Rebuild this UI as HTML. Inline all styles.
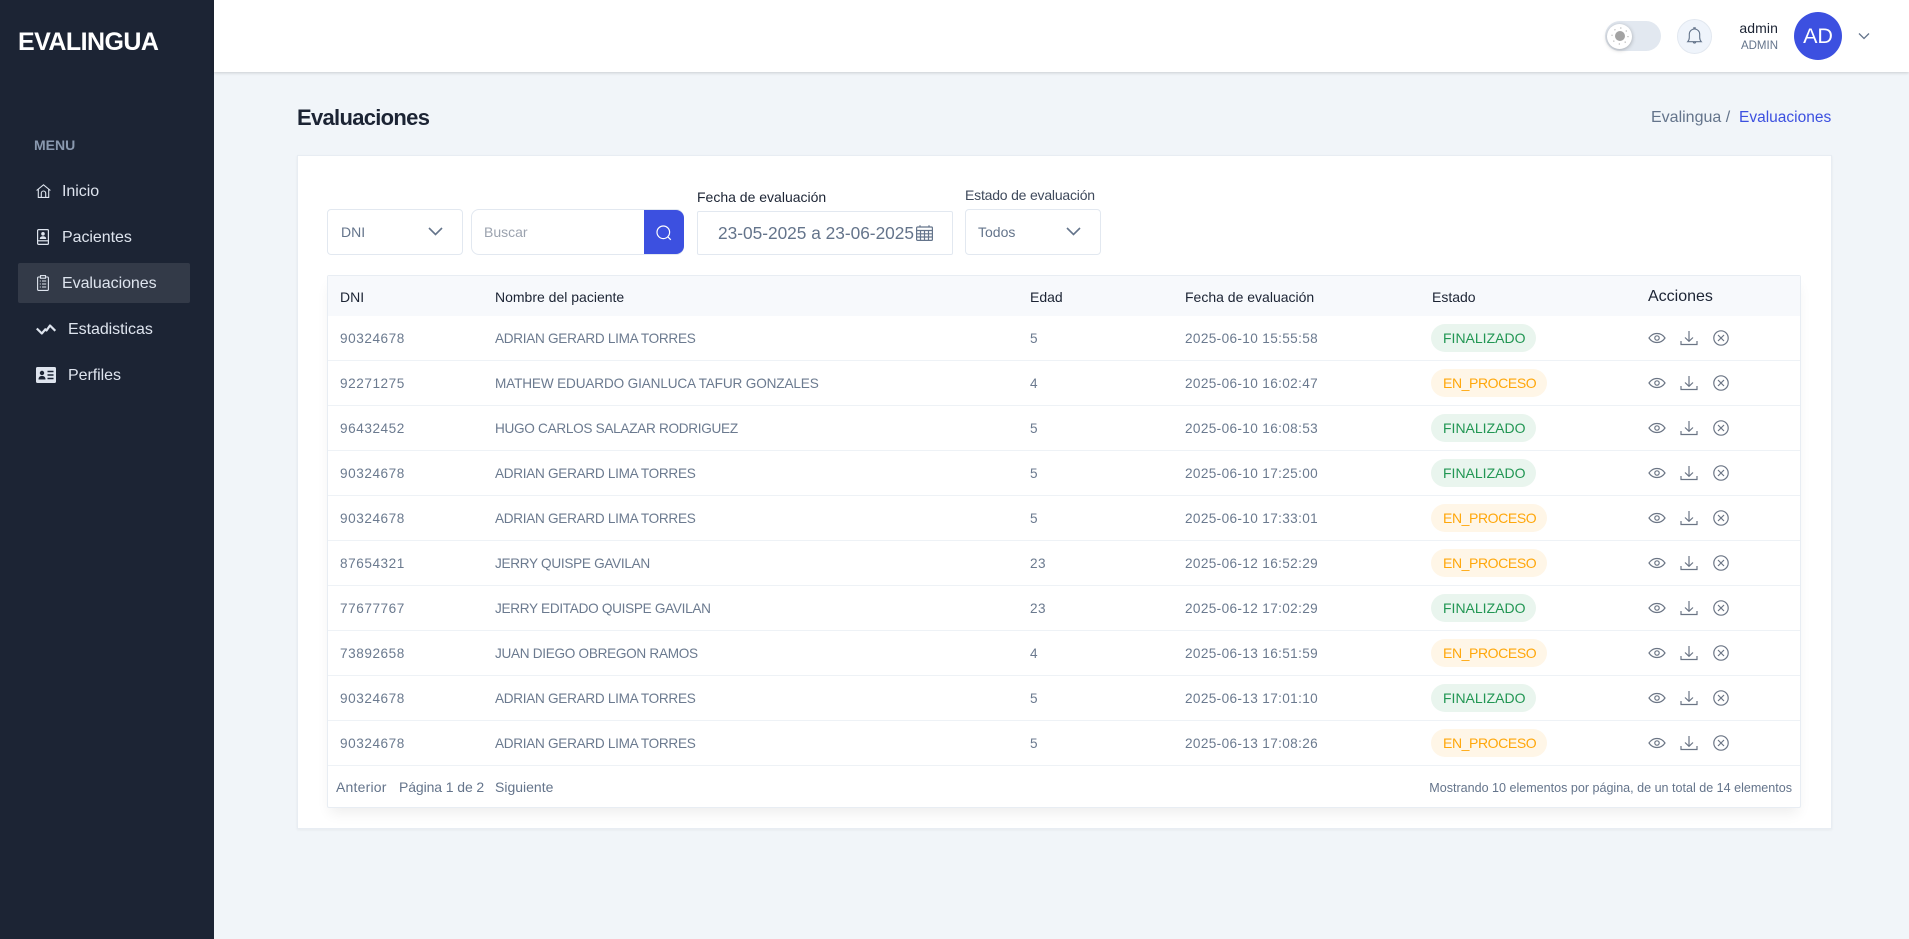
<!DOCTYPE html>
<html lang="es"><head><meta charset="utf-8"><title>Evaluaciones</title>
<style>
*{box-sizing:border-box;margin:0;padding:0}
html,body{width:1909px;height:939px;overflow:hidden;background:#f1f5f9;font-family:"Liberation Sans",sans-serif;color:#64748b}
.a{position:absolute;white-space:nowrap}
svg{position:absolute;overflow:visible;fill:none}
#side{position:absolute;left:0;top:0;width:214px;height:939px;background:#1c2434}
.nav{position:absolute;font-size:16px;line-height:24px;color:#dee4ee;white-space:nowrap;letter-spacing:-.05px}
#head{position:absolute;left:214px;top:0;width:1695px;height:72px;background:#fff;box-shadow:0 1px 3px rgba(0,0,0,.16)}
#card{position:absolute;left:297px;top:155px;width:1535px;height:674px;background:#fff;border:1px solid #e8edf3;box-shadow:0 1px 3px rgba(0,0,0,.05)}
.box{position:absolute;background:#fff;border:1px solid #e2e8f0;border-radius:4px;font-size:14px;color:#64748b;white-space:nowrap}
#tbl{position:absolute;left:327px;top:275px;width:1474px;height:533px;background:#fff;border:1px solid #e8edf3;border-radius:2px;box-shadow:0 8px 13px -3px rgba(0,0,0,.07)}
#th{position:absolute;left:328px;top:276px;width:1472px;height:40px;background:#f7f9fc}
.h{position:absolute;top:277px;line-height:40px;font-size:14px;color:#1c2434;white-space:nowrap}
.r{position:absolute;left:328px;width:1472px;height:45px;border-bottom:1px solid #eef2f6;font-size:13.6px;color:#6b7a8f}
.r span{position:absolute;top:0;line-height:45px;white-space:nowrap}
.r .n{letter-spacing:-.3px;left:167px}
.r .m{letter-spacing:.55px;left:12px}
.r .t{letter-spacing:.36px;left:857px}
.r .e{left:702px;letter-spacing:.5px}
.r .b{top:8px;left:1103px;height:28px;line-height:28px;border-radius:14px;padding:0 12px;font-size:14px}
.f{background:#e9f5ee;color:#219653;width:105px}
.p{background:#fff6e7;color:#ffa70b;width:116px;letter-spacing:-.4px}
.r svg{stroke:#6b7585;stroke-width:1.2}
</style></head><body>
<div id="side">
<div class="a" style="left:18px;top:27px;font-size:25px;font-weight:700;line-height:30px;color:#fff;letter-spacing:-.55px">EVALINGUA</div>
<div class="a" style="left:34px;top:136px;font-size:14px;font-weight:700;line-height:18px;color:#8a99af">MENU</div>
<div style="position:absolute;left:18px;top:263px;width:172px;height:40px;background:#333a48;border-radius:2px"></div>
<svg style="left:36px;top:184px" width="15" height="14" viewBox="0 0 15 14" stroke="#dee4ee" stroke-width="1.100"><path d="M.6 6.500 7.500.8l6.900 5.700M2.300 5.400v8h10.400v-8M5.300 13.400V9.200a2.200 2.200 0 0 1 4.400 0v4.200"/></svg>
<div class="nav" style="left:62px;top:180px">Inicio</div>
<svg style="left:37px;top:229px" width="12" height="16" viewBox="0 0 12 16" stroke="#dee4ee" stroke-width="1.200"><rect x=".6" y=".6" width="10.800" height="14.800" rx="1"/><path d="M.6 11.800h10.800"/><path fill="#dee4ee" stroke="none" d="M6 3a1.800 1.800 0 1 1 0 3.600A1.800 1.800 0 0 1 6 3zM2.800 10c0-2 1.400-2.700 3.200-2.700s3.200.7 3.200 2.700z"/></svg>
<div class="nav" style="left:62px;top:226px">Pacientes</div>
<svg style="left:37px;top:275px" width="12" height="16" viewBox="0 0 12 16" stroke="#dee4ee" stroke-width="1.100"><rect x=".6" y="2" width="10.800" height="13.400" rx="1"/><rect x="3.500" y=".6" width="5" height="2.600" fill="#333a48"/><path d="M2.800 6h1M5 6h4.200M2.800 9h1M5 9h4.200M2.800 12h1M5 12h4.200"/></svg>
<div class="nav" style="left:62px;top:272px">Evaluaciones</div>
<svg style="left:36px;top:324px" width="20" height="11" viewBox="0 0 20 11" stroke="#dee4ee" stroke-width="2.200"><path d="M.8 4.500l5 5 3.500-4.200 1.200 1.200L14 1.500l5.300 5.300" stroke-linejoin="round"/></svg>
<div class="nav" style="left:68px;top:318px">Estadisticas</div>
<svg style="left:36px;top:367px" width="20" height="16" viewBox="0 0 20 16"><rect width="20" height="16" rx="1.500" fill="#dee4ee"/><circle cx="6" cy="6" r="2.200" fill="#1c2434"/><path d="M2.500 12.500c0-2.600 1.500-3.500 3.500-3.500s3.500.9 3.500 3.500z" fill="#1c2434"/><path d="M11.500 4.500h6M11.500 8h6M11.500 11.500h6" stroke="#1c2434" stroke-width="1.500"/></svg>
<div class="nav" style="left:68px;top:364px">Perfiles</div>
</div>
<div id="head"></div>
<div style="position:absolute;left:1605px;top:21px;width:56px;height:30px;border-radius:15px;background:#e2e8f0"></div>
<div style="position:absolute;left:1607px;top:23.500px;width:25px;height:25px;border-radius:50%;background:#fff;box-shadow:0 1px 4px rgba(0,0,0,.28)"></div>
<svg style="left:1610px;top:26px" width="20" height="20" viewBox="0 0 20 20"><circle cx="10" cy="10" r="5" fill="#a3a3a3"/><circle cx="10" cy="10" r="8" stroke="#b5b5b5" stroke-width="1.200" stroke-dasharray="1.200 5.080"/></svg>
<div style="position:absolute;left:1677px;top:19px;width:35px;height:35px;border-radius:50%;background:#eff4fb;border:1px solid #e2e8f0"></div>
<svg style="left:1687px;top:27px" width="15" height="18" viewBox="0 0 15 18" stroke="#64748b" stroke-width="1.100"><path d="M.7 14.700h13.600c-1.100-1.200-1.600-2.400-1.600-4.200V7.200a5.200 5.200 0 0 0-10.400 0v3.300c0 1.800-.5 3-1.600 4.200zM6.800 2V.8h1.400V2M6.300 14.900c0 1.500 2.400 1.500 2.400 0"/></svg>
<div class="a" style="right:131px;top:19px;font-size:14px;line-height:18px;color:#1c2434;letter-spacing:.1px">admin</div>
<div class="a" style="right:131px;top:37px;font-size:11.500px;line-height:18px;color:#64748b">ADMIN</div>
<div class="a" style="left:1794px;top:12px;width:48px;height:48px;border-radius:50%;background:#3c50e0;color:#fff;font-size:21.500px;line-height:48px;text-align:center">AD</div>
<svg style="left:1858px;top:32px" width="12" height="8" viewBox="0 0 12 8" stroke="#64748b" stroke-width="1.300"><path d="M1 1.500l5 5 5-5"/></svg>
<div class="a" style="left:297px;top:103px;font-size:22px;font-weight:700;line-height:30px;color:#1c2434;letter-spacing:-.7px">Evaluaciones</div>
<div class="a" style="left:1651px;top:106px;font-size:16px;line-height:24px;color:#64748b">Evalingua /</div>
<div class="a" style="left:1739px;top:106px;font-size:15.500px;line-height:24px;color:#3c50e0">Evaluaciones</div>
<div id="card"></div>
<div class="box" style="left:327px;top:209px;width:136px;height:46px;line-height:44px;padding-left:13px">DNI</div>
<svg style="left:428px;top:227px" width="15" height="9" viewBox="0 0 15 9" stroke="#64748b" stroke-width="1.600"><path d="M1 1l6.500 6.500L14 1"/></svg>
<div class="box" style="left:471px;top:209px;width:213px;height:46px;line-height:44px;padding-left:12px;border-radius:8px;color:#9ca3af">Buscar</div>
<div style="position:absolute;left:644px;top:210px;width:40px;height:44px;background:#3c50e0;border-radius:0 8px 8px 0"></div>
<svg style="left:656px;top:225px" width="16" height="16" viewBox="0 0 16 16" stroke="#fff" stroke-width="1.200"><circle cx="7.300" cy="7.300" r="6.300"/><path d="M11.800 11.800l3 3"/></svg>
<div class="a" style="left:697px;top:188px;font-size:14px;line-height:18px;color:#1c2434">Fecha de evaluación</div>
<div class="box" style="left:697px;top:211px;width:256px;height:44px;border-radius:2px;line-height:42px;padding-left:20px;font-size:17.300px">23-05-2025 a 23-06-2025</div>
<svg style="left:916px;top:225px" width="17" height="16" viewBox="0 0 17 16" stroke="#64748b" stroke-width="1.200"><rect x=".6" y="2" width="15.800" height="13.400" rx="1"/><path d="M.6 5.500h15.800M.6 8.800h15.800M.6 12h15.800M4.500 5.500v10M8.500 5.500v10M12.500 5.500v10M4 .3v2M13 .3v2"/></svg>
<div class="a" style="left:965px;top:186px;font-size:14px;line-height:18px;color:#3f4a5c;letter-spacing:-.2px">Estado de evaluación</div>
<div class="box" style="left:965px;top:209px;width:136px;height:46px;line-height:44px;padding-left:12px">Todos</div>
<svg style="left:1066px;top:227px" width="15" height="9" viewBox="0 0 15 9" stroke="#64748b" stroke-width="1.600"><path d="M1 1l6.500 6.500L14 1"/></svg>
<div id="tbl"></div><div id="th"></div>
<div class="h" style="left:340px">DNI</div>
<div class="h" style="left:495px">Nombre del paciente</div>
<div class="h" style="left:1030px">Edad</div>
<div class="h" style="left:1185px">Fecha de evaluación</div>
<div class="h" style="left:1432px">Estado</div>
<div class="h" style="left:1648px;font-size:16px">Acciones</div>

<div class="r" style="top:316px"><span class="m">90324678</span><span class="n">ADRIAN GERARD LIMA TORRES</span><span class="e">5</span><span class="t">2025-06-10 15:55:58</span><span class="b f">FINALIZADO</span>
<svg style="left:1320px;top:16px" width="18" height="12" viewBox="0 0 18 12"><path d="M1 6c4-6 12-6 16 0-4 6-12 6-16 0z"/><circle cx="9" cy="6" r="2.200"/></svg><svg style="left:1352px;top:14px" width="18" height="16" viewBox="0 0 18 16"><path d="M9 1v10M5 7.500l4 3.800 4-3.800M1 11v3.500h16V11"/></svg><svg style="left:1385px;top:14px" width="16" height="16" viewBox="0 0 16 16"><circle cx="8" cy="8" r="7.200"/><path d="M5 5l6 6M11 5l-6 6"/></svg></div>
<div class="r" style="top:361px"><span class="m">92271275</span><span class="n" style="letter-spacing:-.15px">MATHEW EDUARDO GIANLUCA TAFUR GONZALES</span><span class="e">4</span><span class="t">2025-06-10 16:02:47</span><span class="b p">EN_PROCESO</span>
<svg style="left:1320px;top:16px" width="18" height="12" viewBox="0 0 18 12"><path d="M1 6c4-6 12-6 16 0-4 6-12 6-16 0z"/><circle cx="9" cy="6" r="2.200"/></svg><svg style="left:1352px;top:14px" width="18" height="16" viewBox="0 0 18 16"><path d="M9 1v10M5 7.500l4 3.800 4-3.800M1 11v3.500h16V11"/></svg><svg style="left:1385px;top:14px" width="16" height="16" viewBox="0 0 16 16"><circle cx="8" cy="8" r="7.200"/><path d="M5 5l6 6M11 5l-6 6"/></svg></div>
<div class="r" style="top:406px"><span class="m">96432452</span><span class="n">HUGO CARLOS SALAZAR RODRIGUEZ</span><span class="e">5</span><span class="t">2025-06-10 16:08:53</span><span class="b f">FINALIZADO</span>
<svg style="left:1320px;top:16px" width="18" height="12" viewBox="0 0 18 12"><path d="M1 6c4-6 12-6 16 0-4 6-12 6-16 0z"/><circle cx="9" cy="6" r="2.200"/></svg><svg style="left:1352px;top:14px" width="18" height="16" viewBox="0 0 18 16"><path d="M9 1v10M5 7.500l4 3.800 4-3.800M1 11v3.500h16V11"/></svg><svg style="left:1385px;top:14px" width="16" height="16" viewBox="0 0 16 16"><circle cx="8" cy="8" r="7.200"/><path d="M5 5l6 6M11 5l-6 6"/></svg></div>
<div class="r" style="top:451px"><span class="m">90324678</span><span class="n">ADRIAN GERARD LIMA TORRES</span><span class="e">5</span><span class="t">2025-06-10 17:25:00</span><span class="b f">FINALIZADO</span>
<svg style="left:1320px;top:16px" width="18" height="12" viewBox="0 0 18 12"><path d="M1 6c4-6 12-6 16 0-4 6-12 6-16 0z"/><circle cx="9" cy="6" r="2.200"/></svg><svg style="left:1352px;top:14px" width="18" height="16" viewBox="0 0 18 16"><path d="M9 1v10M5 7.500l4 3.800 4-3.800M1 11v3.500h16V11"/></svg><svg style="left:1385px;top:14px" width="16" height="16" viewBox="0 0 16 16"><circle cx="8" cy="8" r="7.200"/><path d="M5 5l6 6M11 5l-6 6"/></svg></div>
<div class="r" style="top:496px"><span class="m">90324678</span><span class="n">ADRIAN GERARD LIMA TORRES</span><span class="e">5</span><span class="t">2025-06-10 17:33:01</span><span class="b p">EN_PROCESO</span>
<svg style="left:1320px;top:16px" width="18" height="12" viewBox="0 0 18 12"><path d="M1 6c4-6 12-6 16 0-4 6-12 6-16 0z"/><circle cx="9" cy="6" r="2.200"/></svg><svg style="left:1352px;top:14px" width="18" height="16" viewBox="0 0 18 16"><path d="M9 1v10M5 7.500l4 3.800 4-3.800M1 11v3.500h16V11"/></svg><svg style="left:1385px;top:14px" width="16" height="16" viewBox="0 0 16 16"><circle cx="8" cy="8" r="7.200"/><path d="M5 5l6 6M11 5l-6 6"/></svg></div>
<div class="r" style="top:541px"><span class="m">87654321</span><span class="n">JERRY QUISPE GAVILAN</span><span class="e">23</span><span class="t">2025-06-12 16:52:29</span><span class="b p">EN_PROCESO</span>
<svg style="left:1320px;top:16px" width="18" height="12" viewBox="0 0 18 12"><path d="M1 6c4-6 12-6 16 0-4 6-12 6-16 0z"/><circle cx="9" cy="6" r="2.200"/></svg><svg style="left:1352px;top:14px" width="18" height="16" viewBox="0 0 18 16"><path d="M9 1v10M5 7.500l4 3.800 4-3.800M1 11v3.500h16V11"/></svg><svg style="left:1385px;top:14px" width="16" height="16" viewBox="0 0 16 16"><circle cx="8" cy="8" r="7.200"/><path d="M5 5l6 6M11 5l-6 6"/></svg></div>
<div class="r" style="top:586px"><span class="m">77677767</span><span class="n">JERRY EDITADO QUISPE GAVILAN</span><span class="e">23</span><span class="t">2025-06-12 17:02:29</span><span class="b f">FINALIZADO</span>
<svg style="left:1320px;top:16px" width="18" height="12" viewBox="0 0 18 12"><path d="M1 6c4-6 12-6 16 0-4 6-12 6-16 0z"/><circle cx="9" cy="6" r="2.200"/></svg><svg style="left:1352px;top:14px" width="18" height="16" viewBox="0 0 18 16"><path d="M9 1v10M5 7.500l4 3.800 4-3.800M1 11v3.500h16V11"/></svg><svg style="left:1385px;top:14px" width="16" height="16" viewBox="0 0 16 16"><circle cx="8" cy="8" r="7.200"/><path d="M5 5l6 6M11 5l-6 6"/></svg></div>
<div class="r" style="top:631px"><span class="m">73892658</span><span class="n">JUAN DIEGO OBREGON RAMOS</span><span class="e">4</span><span class="t">2025-06-13 16:51:59</span><span class="b p">EN_PROCESO</span>
<svg style="left:1320px;top:16px" width="18" height="12" viewBox="0 0 18 12"><path d="M1 6c4-6 12-6 16 0-4 6-12 6-16 0z"/><circle cx="9" cy="6" r="2.200"/></svg><svg style="left:1352px;top:14px" width="18" height="16" viewBox="0 0 18 16"><path d="M9 1v10M5 7.500l4 3.800 4-3.800M1 11v3.500h16V11"/></svg><svg style="left:1385px;top:14px" width="16" height="16" viewBox="0 0 16 16"><circle cx="8" cy="8" r="7.200"/><path d="M5 5l6 6M11 5l-6 6"/></svg></div>
<div class="r" style="top:676px"><span class="m">90324678</span><span class="n">ADRIAN GERARD LIMA TORRES</span><span class="e">5</span><span class="t">2025-06-13 17:01:10</span><span class="b f">FINALIZADO</span>
<svg style="left:1320px;top:16px" width="18" height="12" viewBox="0 0 18 12"><path d="M1 6c4-6 12-6 16 0-4 6-12 6-16 0z"/><circle cx="9" cy="6" r="2.200"/></svg><svg style="left:1352px;top:14px" width="18" height="16" viewBox="0 0 18 16"><path d="M9 1v10M5 7.500l4 3.800 4-3.800M1 11v3.500h16V11"/></svg><svg style="left:1385px;top:14px" width="16" height="16" viewBox="0 0 16 16"><circle cx="8" cy="8" r="7.200"/><path d="M5 5l6 6M11 5l-6 6"/></svg></div>
<div class="r" style="top:721px"><span class="m">90324678</span><span class="n">ADRIAN GERARD LIMA TORRES</span><span class="e">5</span><span class="t">2025-06-13 17:08:26</span><span class="b p">EN_PROCESO</span>
<svg style="left:1320px;top:16px" width="18" height="12" viewBox="0 0 18 12"><path d="M1 6c4-6 12-6 16 0-4 6-12 6-16 0z"/><circle cx="9" cy="6" r="2.200"/></svg><svg style="left:1352px;top:14px" width="18" height="16" viewBox="0 0 18 16"><path d="M9 1v10M5 7.500l4 3.800 4-3.800M1 11v3.500h16V11"/></svg><svg style="left:1385px;top:14px" width="16" height="16" viewBox="0 0 16 16"><circle cx="8" cy="8" r="7.200"/><path d="M5 5l6 6M11 5l-6 6"/></svg></div>

<div class="a" style="left:336px;top:778px;font-size:14px;line-height:18px;letter-spacing:.2px">Anterior</div>
<div class="a" style="left:399px;top:778px;font-size:14px;line-height:18px;letter-spacing:-.1px">Página 1 de 2</div>
<div class="a" style="left:495px;top:778px;font-size:14px;line-height:18px">Siguiente</div>
<div class="a" style="right:117px;top:779px;font-size:12.550px;line-height:18px">Mostrando 10 elementos por página, de un total de 14 elementos</div>
</body></html>
